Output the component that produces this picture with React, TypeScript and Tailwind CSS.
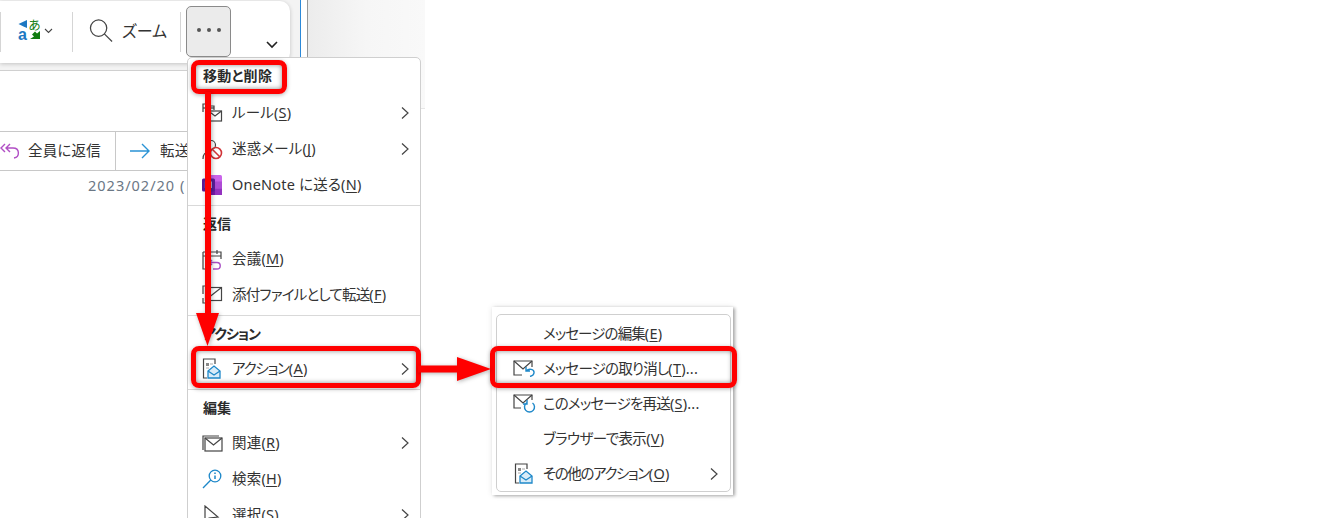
const FONT = '[font-family:"Noto_Sans","Noto_Sans_CJK_JP","Liberation_Sans",sans-serif] [font-feature-settings:"palt"]';

function Mnemonic({ label, k, tail = '', tight = '' }: { label: string; k: string; tail?: string; tight?: string }) {
  return (
    <span>
      <span className={tight}>{label}</span>(<span className="underline underline-offset-2">{k}</span>){tail}
    </span>
  );
}

function Chevron() {
  return (
    <svg width="10" height="14" viewBox="0 0 10 14" fill="none" stroke="#444" strokeWidth="1.2">
      <path d="M2 1.5 8 7l-6 5.5" />
    </svg>
  );
}

function ActionIcon() {
  return (
    <svg width="20" height="22" viewBox="0 0 20 22" fill="none">
      <path d="M6 1H1.5v19H5M6 1h7v5" stroke="#444" strokeWidth="1.2" />
      <rect x="4" y="5" width="3" height="3" fill="#888" />
      <path d="M8 6h3M4 10h3" stroke="#aaa" />
      <path d="M6 13l6-5 6 5v7H6z" fill="#d9ecf8" stroke="#1e88c9" strokeWidth="1.3" />
      <path d="M6 13l6 4 6-4" stroke="#1e88c9" strokeWidth="1.3" />
    </svg>
  );
}

function RulesIcon() {
  return (
    <svg width="21" height="20" viewBox="0 0 21 20" fill="none" stroke="#444" strokeWidth="1.2">
      <path d="M1 9V1h6v2h5v4" />
      <path d="M1 5h11" />
      <rect x="6.500" y="8" width="13" height="10" fill="#fff" />
      <path d="m6.500 8 6.500 5 6.500-5" />
    </svg>
  );
}

function JunkIcon() {
  return (
    <svg width="21" height="21" viewBox="0 0 21 21" fill="none">
      <circle cx="9" cy="6" r="4.500" stroke="#444" strokeWidth="1.2" />
      <path d="M1 20c0-5 3-7 6-7" stroke="#444" strokeWidth="1.2" />
      <circle cx="14" cy="14" r="5.500" stroke="#d13438" strokeWidth="1.6" />
      <path d="m10 10 8 8" stroke="#d13438" strokeWidth="1.6" />
    </svg>
  );
}

function OneNoteIcon() {
  return (
    <svg width="20" height="20" viewBox="0 0 20 20">
      <rect x="6" y="0" width="14" height="20" rx="1.500" fill="#ca64ea" />
      <rect x="13" y="6.500" width="7" height="7" fill="#ae4bd5" />
      <rect x="13" y="13.500" width="7" height="6.500" fill="#9332bf" />
      <rect x="6" y="6.500" width="7" height="13.500" fill="#7719aa" />
      <rect x="0" y="3.500" width="13" height="13" rx="1.500" fill="#5b1d99" />
      <path d="M3.500 13V7h1l3 4.500V7h1.500v6" fill="none" stroke="#fff" strokeWidth="1.200" />
    </svg>
  );
}

function MeetingIcon() {
  return (
    <svg width="21" height="21" viewBox="0 0 21 21" fill="none">
      <path d="M5 1v4M15 1v4M1 3h18v7M1 3v17h7M1 7h18" stroke="#444" strokeWidth="1.200" />
      <path d="M10 11 7.500 13.500 10 16M8 13.500h7a3 3 0 0 1 0 6.500h-4" stroke="#a94fc4" strokeWidth="1.400" />
    </svg>
  );
}

function AttachForwardIcon() {
  return (
    <svg width="21" height="20" viewBox="0 0 21 20" fill="none" stroke="#444" strokeWidth="1.200">
      <path d="M1 9V1h5M1 13v5h3" />
      <rect x="3.500" y="2.500" width="16" height="13" fill="#fff" />
      <path d="M3.500 15 19.500 2.500" />
    </svg>
  );
}

function MailIcon() {
  return (
    <svg width="21" height="17" viewBox="0 0 21 17" fill="none" stroke="#444" strokeWidth="1.200">
      <path d="M1 15V1h16" />
      <rect x="3" y="3" width="17" height="13" fill="#fff" />
      <path d="m3 3 8.500 7L20 3" />
    </svg>
  );
}

function SearchInfoIcon() {
  return (
    <svg width="20" height="20" viewBox="0 0 20 20" fill="none" stroke="#1e88c9" strokeWidth="1.300">
      <circle cx="13" cy="7" r="5.800" />
      <path d="M8.800 11 1 19" />
      <path d="M13 6.500v3.500M13 3.500v1.500" strokeWidth="1.500" />
    </svg>
  );
}

function CursorIcon() {
  return (
    <svg width="18" height="20" viewBox="0 0 18 20" fill="none" stroke="#444" strokeWidth="1.200">
      <path d="M2 1v17l4-5 9-1z" />
    </svg>
  );
}

function UndoMailIcon() {
  return (
    <svg width="23" height="17" viewBox="0 0 23 17" fill="none">
      <path d="M9 15H1V1h18v6" stroke="#444" strokeWidth="1.200" />
      <path d="m1 1 9 8 9-8" stroke="#444" strokeWidth="1.200" />
      <path d="M13 7v4h4M13.500 11c2-3 8-2 7.500 2-.3 2-2 3-4 3.500" stroke="#1e88c9" strokeWidth="1.400" />
    </svg>
  );
}

function ResendIcon() {
  return (
    <svg width="23" height="19" viewBox="0 0 23 19" fill="none">
      <path d="M8 14H1V1h18v5" stroke="#444" strokeWidth="1.200" />
      <path d="m1 1 9 8 9-8" stroke="#444" strokeWidth="1.200" />
      <path d="M13.500 9a5 5 0 1 0 6 0M14 6v4h-4" stroke="#1e88c9" strokeWidth="1.400" />
    </svg>
  );
}

function TranslateIcon() {
  return (
    <svg className="-mt-[2px]" width="26" height="30" viewBox="0 0 26 30" fill="none">
      <path d="M0.500 7 9 3v8L5.500 9.500z" fill="#1e78c2" />
      <text x="0" y="23" fontSize="16" fontWeight="bold" fill="#1e78c2" fontFamily="Liberation Sans">a</text>
      <text x="10.500" y="13" fontSize="12.500" fill="#107c10" fontFamily="Noto Sans CJK JP">あ</text>
      <path d="M12 22h10v-8l-3 2.500-2-2-3 3 2 2z" fill="#107c10" />
    </svg>
  );
}

function MenuHeader({ children, className = '' }: { children: string; className?: string }) {
  return <div className={`flex h-[35px] items-center pl-[15px] text-[14px] font-bold text-[#2b2b2b] ${className}`}>{children}</div>;
}

function MenuRow({ icon, children, arrow = false }: { icon?: React.ReactNode; children: React.ReactNode; arrow?: boolean }) {
  return (
    <div className="flex h-[36px] items-center pr-[10px] text-[14.5px] tracking-[0.2px] text-[#333]">
      <div className="flex w-[44px] shrink-0 items-center justify-center pl-[4px]">{icon}</div>
      <div className="flex-1 whitespace-nowrap">{children}</div>
      {arrow && <Chevron />}
    </div>
  );
}

function Divider() {
  return <div className="mt-[2px] h-px bg-[#d9d9d9]" />;
}

function Callout({ className }: { className: string }) {
  return (
    <div className={`absolute rounded-[8px] border-[5px] border-[#ff0000] shadow-[inset_0_0_5px_rgba(0,0,0,0.45),0_1px_4px_rgba(0,0,0,0.3)] ${className}`} />
  );
}

function SubRow({ icon, children, arrow = false }: { icon?: React.ReactNode; children: React.ReactNode; arrow?: boolean }) {
  return (
    <div className="flex h-[35px] items-center pr-[11px] text-[14.5px] tracking-[0.2px] text-[#333]">
      <div className="flex w-[46px] shrink-0 items-center justify-center pl-[8px]">{icon}</div>
      <div className="flex-1 whitespace-nowrap">{children}</div>
      {arrow && <Chevron />}
    </div>
  );
}

export default function App() {
  return (
    <div className={`relative h-[518px] w-[1344px] overflow-hidden bg-white ${FONT}`}>
      {/* 背景のメールウィンドウ */}
      <div className="flex h-full w-[425px] bg-white">
        <div className="flex w-[300px] shrink-0 flex-col bg-white">
          <div className="h-[71px] border-b border-[#d0d0d0] bg-[#f3f3f3] pt-px">
            <div className="flex h-[62px] w-[290px] items-start rounded-r-[10px] bg-white shadow-[0_1px_4px_rgba(0,0,0,0.2)]">
              <div className="mt-[11px] h-[40px] w-px bg-[#d5d5d5]" />
              <div className="mt-[18px] ml-[17px] flex items-start">
                <TranslateIcon />
                <svg className="mt-[9px]" width="9" height="6" viewBox="0 0 9 6" fill="none" stroke="#444" strokeWidth="1.100"><path d="m1 1 3.500 3.500L8 1" /></svg>
              </div>
              <div className="mt-[11px] ml-[19px] h-[40px] w-px bg-[#d5d5d5]" />
              <div className="mt-[17px] ml-[16px] flex items-center gap-[9px] text-[16px] text-[#333]">
                <svg width="24" height="25" viewBox="0 0 25 25" fill="none" stroke="#444" strokeWidth="1.300">
                  <circle cx="10" cy="10" r="8.500" />
                  <path d="m16 16 8 8" />
                </svg>
                <span>ズーム</span>
              </div>
              <div className="mt-[11px] ml-[13px] h-[40px] w-px bg-[#d5d5d5]" />
              <div className="mt-[5px] ml-[5px] flex h-[51px] w-[45px] items-center justify-center gap-[6px] rounded-[5px] border border-[#8a8a8a] bg-[#ebebeb] pb-[4px]">
                <i className="h-[4px] w-[4px] rounded-full bg-[#555]" />
                <i className="h-[4px] w-[4px] rounded-full bg-[#555]" />
                <i className="h-[4px] w-[4px] rounded-full bg-[#555]" />
              </div>
              <svg className="mt-[40px] ml-[35px]" width="12" height="8" viewBox="0 0 12 8" fill="none" stroke="#222" strokeWidth="1.600"><path d="m1 1 5 5 5-5" /></svg>
            </div>
          </div>
          <div className="flex-1 pt-[60px]">
            <div className="flex h-[40px] w-[200px] items-center border-y border-[#c8c8c8] text-[14.5px] tracking-[0.2px] text-[#333]">
              <div className="flex h-full w-[116px] items-center gap-[8px] border-r border-[#c8c8c8]">
                <svg width="20" height="20" viewBox="0 0 20 20" fill="none" stroke="#b14fc5" strokeWidth="1.400">
                  <path d="M5 3 1 7l4 4M10 3 6 7l4 4M6 7h7c7 0 7 9 1 10" />
                </svg>
                <span>全員に返信</span>
              </div>
              <div className="flex items-center gap-[10px] pl-[14px]">
                <svg width="20" height="16" viewBox="0 0 20 16" fill="none" stroke="#2a93d5" strokeWidth="1.400"><path d="M0 8h19M12 1l7 7-7 7" /></svg>
                <span>転送</span>
              </div>
            </div>
            <div className="mt-[4px] pl-[88px] text-[14.5px] tracking-[1px] text-[#6b7785]">2023/02/20 (</div>
          </div>
        </div>
        <div className="h-full w-[8px] border-x border-l-[#2b88d8] border-r-[#999999] bg-white" />
        <div className="flex-1">
          <div className="h-[109px] border-b border-[#e6e6e6] bg-gradient-to-r from-[#ececec] via-[#f6f6f6] to-[#f9f9f9]" />
        </div>
      </div>

      {/* メインメニュー */}
      <div className="absolute left-[187px] top-[57px] h-[480px] w-[234px] rounded-[5px] border border-[#cfcfcf] bg-white">
        <MenuHeader className="mb-[2px] tracking-[0.3px]">移動と削除</MenuHeader>
        <MenuRow icon={<RulesIcon />} arrow><Mnemonic label="ルール" k="S" /></MenuRow>
        <MenuRow icon={<JunkIcon />} arrow><Mnemonic label="迷惑メール" k="J" /></MenuRow>
        <MenuRow icon={<OneNoteIcon />}><Mnemonic label="OneNote に送る" k="N" /></MenuRow>
        <Divider />
        <MenuHeader>返信</MenuHeader>
        <MenuRow icon={<MeetingIcon />}><Mnemonic label="会議" k="M" /></MenuRow>
        <MenuRow icon={<AttachForwardIcon />}><Mnemonic label="添付ファイルとして転送" k="F" tight="tracking-[-0.8px]" /></MenuRow>
        <Divider />
        <MenuHeader className="tracking-[-1px]">アクション</MenuHeader>
        <MenuRow icon={<ActionIcon />} arrow><Mnemonic label="アクション" k="A" tight="tracking-[-1.2px]" /></MenuRow>
        <Divider />
        <MenuHeader>編集</MenuHeader>
        <MenuRow icon={<MailIcon />} arrow><Mnemonic label="関連" k="R" /></MenuRow>
        <MenuRow icon={<SearchInfoIcon />}><Mnemonic label="検索" k="H" /></MenuRow>
        <MenuRow icon={<CursorIcon />} arrow><Mnemonic label="選択" k="S" /></MenuRow>
      </div>

      {/* サブメニュー（切り抜き画像の余白ごと） */}
      <div className="absolute left-[492px] top-[307px] h-[188px] w-[241px] bg-white pt-[7px] pl-[4px] shadow-[2px_1px_3px_rgba(0,0,0,0.3),0_0_6px_rgba(0,0,0,0.1)]">
        <div className="w-[235px] rounded-[5px] border border-[#cfcfcf] bg-white pt-px">
          <SubRow><Mnemonic label="メッセージの編集" k="E" tight="tracking-[-0.9px]" /></SubRow>
          <SubRow icon={<UndoMailIcon />}><Mnemonic label="メッセージの取り消し" k="T" tail="..." tight="tracking-[-0.8px]" /></SubRow>
          <SubRow icon={<ResendIcon />}><Mnemonic label="このメッセージを再送" k="S" tail="..." tight="tracking-[-0.8px]" /></SubRow>
          <SubRow><Mnemonic label="ブラウザーで表示" k="V" tight="tracking-[-0.6px]" /></SubRow>
          <SubRow icon={<ActionIcon />} arrow><Mnemonic label="その他のアクション" k="O" tight="tracking-[-1.4px]" /></SubRow>
        </div>
      </div>

      {/* 赤い注釈 */}
      <Callout className="left-[191px] top-[60px] h-[34px] w-[96px]" />
      <Callout className="left-[191px] top-[346px] h-[42px] w-[230px]" />
      <Callout className="left-[490px] top-[346px] h-[42px] w-[247px]" />
      <svg className="absolute left-[190px] top-[92px] [filter:drop-shadow(1px_1px_2px_rgba(0,0,0,0.3))]" width="36" height="260" viewBox="0 0 36 260" fill="#ff0000">
        <path d="M15 0h6v224h-6z" />
        <path d="M6 221h23l-11.500 33z" />
      </svg>
      <svg className="absolute left-[418px] top-[355px] [filter:drop-shadow(1px_1px_2px_rgba(0,0,0,0.3))]" width="76" height="28" viewBox="0 0 76 28" fill="#ff0000">
        <path d="M0 10.500h41v7H0z" />
        <path d="M39 2l34 12-34 12z" />
      </svg>
    </div>
  );
}
